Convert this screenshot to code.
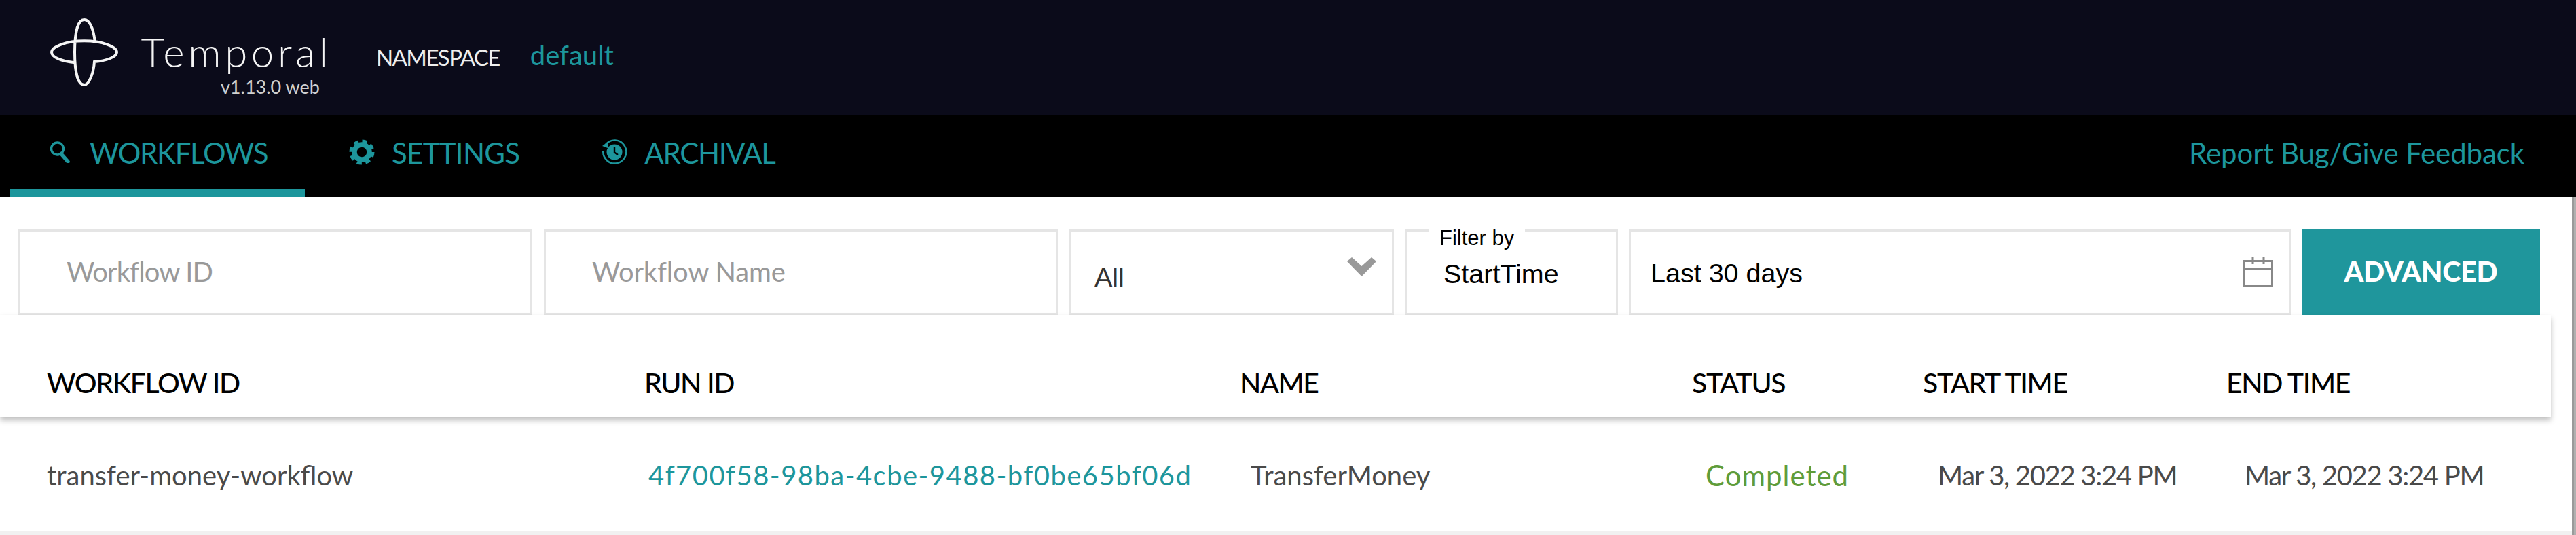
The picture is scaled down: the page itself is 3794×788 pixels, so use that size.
<div class="page">
	<header class="top">
		<div class="brand">
			<svg class="logo" viewBox="0 0 300 300" aria-hidden="true">
				<path d="M197 100C190 40 172 6 150 6C120 6 108 70 108 150C108 230 120 294 150 294C172 294 192 240 195 192C250 188 294 170 294 150C294 125 230 100 150 100C70 100 6 125 6 150C6 172 50 190 108 196" />
			</svg>
			<div class="brand-text">
				<span class="word">Temporal</span>
				<span class="version">v1.13.0 web</span>
			</div>
		</div>
		<span class="ns-label">NAMESPACE</span>
		<a class="ns-value" href="#default">default</a>
	</header>

	<nav class="tabs">
		<a class="tab active" href="#workflows">
			<svg class="ico" viewBox="0 0 32 32" aria-hidden="true">
				<circle cx="11.5" cy="11" r="9" fill="none" stroke="currentColor" stroke-width="3.4" />
				<path d="M17 18.5L27 30" fill="none" stroke="currentColor" stroke-width="5.5" stroke-linecap="round" />
			</svg>
			WORKFLOWS
		</a>
		<a class="tab settings" href="#settings">
			<svg class="ico gear" viewBox="0 0 38 38" aria-hidden="true">
				<circle cx="19" cy="19" r="11" fill="none" stroke="currentColor" stroke-width="7.5" />
				<circle cx="19" cy="19" r="16" fill="none" stroke="currentColor" stroke-width="5" stroke-dasharray="7.05 5.52" />
			</svg>
			SETTINGS
		</a>
		<a class="tab archival" href="#archival">
			<svg class="ico arch" viewBox="0 0 38 38" aria-hidden="true">
				<path d="M6 8A17 17 0 1 1 2.4 17" fill="none" stroke="currentColor" stroke-width="2.6" />
				<path d="M1 10L9 4L9 13Z" fill="currentColor" />
				<circle cx="19" cy="19" r="11.5" fill="currentColor" />
				<path d="M19 11V19.5L24 23" fill="none" stroke="#000" stroke-width="2.4" />
			</svg>
			ARCHIVAL
		</a>
		<a class="feedback" href="#feedback">Report Bug/Give Feedback</a>
	</nav>

	<main class="content">
		<div class="filters">
			<div class="field id"><span class="placeholder">Workflow ID</span></div>
			<div class="field id name"><span class="placeholder">Workflow Name</span></div>
			<div class="field status">
				<span>All</span>
				<svg class="chevron" viewBox="0 0 43 28" aria-hidden="true"><path d="M0 6L7 0L21.5 13L36 0L43 6L21.5 28Z" /></svg>
			</div>
			<fieldset class="field by">
				<legend>Filter by</legend>
				<span>StartTime</span>
			</fieldset>
			<div class="field range">
				<span>Last 30 days</span>
				<svg class="calendar" viewBox="0 0 44 44" aria-hidden="true">
					<path d="M1.5 5.5H42.5V42.5H1.5ZM1.5 17H42.5M14 0V10M30 0V10" />
				</svg>
			</div>
			<button class="advanced" type="button">ADVANCED</button>
		</div>

		<div class="thead">
			<span>WORKFLOW ID</span>
			<span>RUN ID</span>
			<span>NAME</span>
			<span>STATUS</span>
			<span>START TIME</span>
			<span>END TIME</span>
		</div>
		<div class="row">
			<span>transfer-money-workflow</span>
			<a class="run" href="#run">4f700f58-98ba-4cbe-9488-bf0be65bf06d</a>
			<span>TransferMoney</span>
			<span class="completed">Completed</span>
			<span class="date">Mar 3, 2022 3:24 PM</span>
			<span class="date">Mar 3, 2022 3:24 PM</span>
		</div>
	</main>
	<div class="scrollbar"></div>
</div>

<style>
	:global(body) {
		margin: 0;
		background: #f1f1f1;
	}
	.page {
		position: relative;
		width: 3794px;
		height: 788px;
		overflow: hidden;
		font-family: Lato, 'Open Sans', sans-serif;
		color: #4a4a4a;
		background: #f1f1f1;
	}
	a {
		text-decoration: none;
		color: #1d969c;
	}
	.top {
		height: 170px;
		box-sizing: border-box;
		background: #0b0b1a;
		display: flex;
		align-items: flex-start;
		padding-left: 73px;
	}
	.brand {
		display: flex;
		margin-top: 27px;
		width: 481px;
	}
	.logo {
		width: 102px;
		height: 100px;
		fill: none;
		stroke: #f5f5f5;
		stroke-width: 12;
	}
	.brand-text {
		display: flex;
		flex-direction: column;
		align-items: flex-end;
		margin-left: 30px;
		width: 278px;
	}
	.word {
		font-size: 60px;
		line-height: 70px;
		margin-top: 14px;
		font-weight: 300;
		letter-spacing: 5.6px;
		margin-right: -5.6px;
		color: #f5f5f5;
	}
	.version {
		font-size: 27px;
		line-height: 30px;
		margin-top: 2px;
		margin-right: 12px;
		color: #d0d0d0;
	}
	.ns-label {
		font-size: 33px;
		line-height: 40px;
		margin-top: 64px;
		letter-spacing: -1.6px;
		color: #eee;
	}
	.ns-value {
		font-size: 40px;
		line-height: 48px;
		margin-top: 57px;
		margin-left: 45px;
	}
	.tabs {
		height: 120px;
		background: #000;
		display: flex;
		align-items: stretch;
		padding-left: 14px;
		padding-right: 76px;
	}
	.tab {
		display: flex;
		align-items: flex-start;
		box-sizing: border-box;
		padding-top: 30px;
		font-size: 42px;
		line-height: 50px;
		letter-spacing: -1.3px;
		gap: 27px;
	}
	.tab.active {
		width: 435px;
		padding-left: 59px;
		border-bottom: 12px solid #1d969c;
	}
	.tab.settings {
		margin-left: 65px;
		gap: 25px;
		letter-spacing: -0.7px;
	}
	.tab.archival {
		margin-left: 121px;
		gap: 25px;
	}
	.ico {
		width: 32px;
		height: 32px;
		margin-top: 8px;
		flex: none;
	}
	.gear,
	.arch {
		width: 38px;
		height: 38px;
		margin-top: 5px;
	}
	.feedback {
		margin-left: auto;
		font-size: 42px;
		line-height: 50px;
		padding-top: 30px;
		letter-spacing: -0.1px;
	}
	.content {
		height: 492px;
		background: #fff;
	}
	.filters {
		display: flex;
		gap: 16px;
		padding: 48px 0 0 27px;
		height: 126px;
	}
	.field {
		box-sizing: border-box;
		height: 126px;
		border: 3px solid #e5e5e5;
		margin: 0;
		display: flex;
		align-items: center;
		font-family: 'Liberation Sans', Arial, sans-serif;
		font-size: 39.5px;
		color: #000;
	}
	.field.id {
		width: 757px;
		padding-left: 68px;
		padding-bottom: 3px;
		margin-right: 1px;
	}
	.placeholder {
		font-family: Lato, sans-serif;
		font-size: 40px;
		letter-spacing: -0.9px;
		color: #999;
	}
	.name .placeholder {
		letter-spacing: -0.2px;
	}
	.field.status {
		width: 478px;
		padding-left: 34px;
		padding-top: 14px;
		color: #333;
		position: relative;
	}
	.chevron {
		position: absolute;
		right: 23px;
		top: 38px;
		width: 43px;
		height: 28px;
		fill: #999;
	}
	.field.by {
		width: 314px;
		padding: 0 0 0 54px;
		display: block;
		position: relative;
	}
	.field.by legend {
		font-size: 31px;
		line-height: 22px;
		padding: 0 16px;
		margin-left: -22px;
		height: 0;
	}
	.field.by span {
		position: absolute;
		left: 54px;
		top: 37px;
		line-height: 50px;
	}
	.field.range {
		width: 975px;
		padding-left: 29px;
		padding-top: 2px;
		position: relative;
	}
	.calendar {
		position: absolute;
		right: 23px;
		top: 38px;
		width: 44px;
		height: 44px;
		fill: none;
		stroke: #888;
		stroke-width: 3;
	}
	.advanced {
		box-sizing: border-box;
		width: 351px;
		height: 126px;
		border: 0;
		padding: 0 0 3px;
		background: #1f969c;
		color: #fff;
		font-family: Lato, sans-serif;
		font-weight: 900;
		font-size: 41px;
		letter-spacing: -0.2px;
	}
	.thead,
	.row {
		display: grid;
		align-items: center;
		padding-left: 69px;
		box-sizing: border-box;
	}
	.thead {
		width: 3757px;
		height: 150px;
		padding-top: 48px;
		grid-template-columns: 880px 877px 666px 340px 447px 1fr;
		font-size: 41px;
		font-weight: 500;
		letter-spacing: -1.4px;
		color: #000;
		box-shadow: 0 5px 8px rgba(0, 0, 0, 0.25);
		background: #fff;
		position: relative;
	}
	.row {
		height: 168px;
		padding-top: 3px;
		grid-template-columns: 886px 887px 670px 342px 452px 1fr;
		font-size: 40px;
	}
	.run {
		letter-spacing: 1.45px;
	}
	.completed {
		color: #5f9c3a;
		font-size: 42px;
		letter-spacing: 1px;
	}
	.date {
		letter-spacing: -1.3px;
	}
	.scrollbar {
		position: absolute;
		top: 290px;
		right: 0;
		bottom: 0;
		width: 3px;
		background: #b0b0b0;
		border-left: 3px solid #9a9a9a;
	}
</style>
